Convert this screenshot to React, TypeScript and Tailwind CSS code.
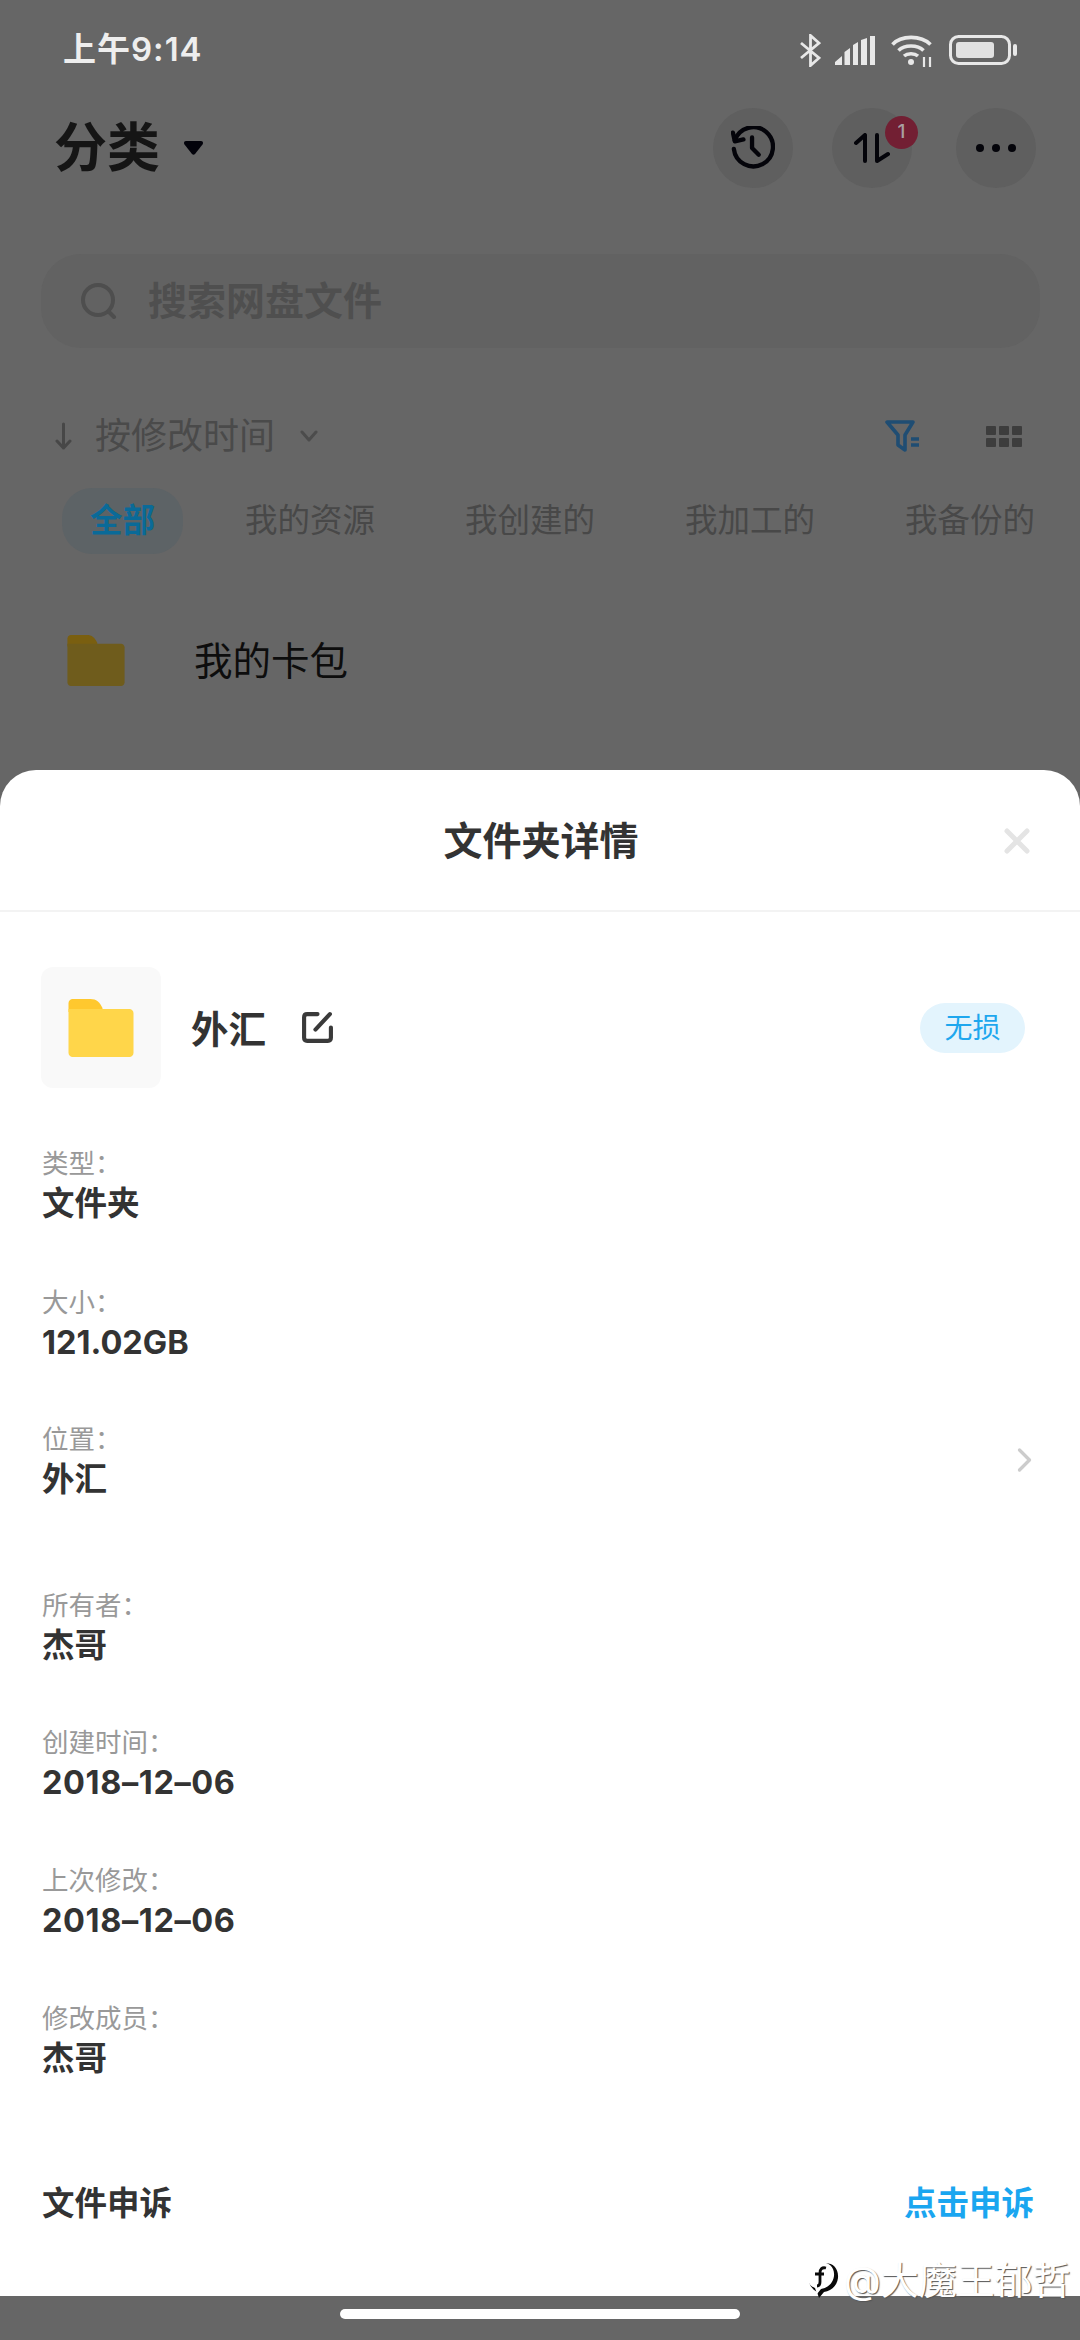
import React from "react";

const font = { fontFamily: '"Inter","Noto Sans CJK SC",sans-serif' };

function Folder({ w, h, body, tab }: { w: number; h: number; body: string; tab: string }) {
  return (
    <svg width={w} height={h} viewBox="0 0 65 58">
      <path d="M4 0h18c6 0 9 3 12 9v4H0V4c0-2 2-4 4-4z" fill={tab} />
      <path d="M0 10h61c2 0 4 2 4 4v40c0 2-2 4-4 4H4c-2 0-4-2-4-4z" fill={body} />
    </svg>
  );
}

function Row({ label, value, className = "", valueClass = "" }: { label: string; value: string; className?: string; valueClass?: string }) {
  return (
    <div className={"flex flex-col " + className}>
      <div className="h-[40px] text-[26.500px] leading-[40px] text-[#999999]">{label}</div>
      <div className={"h-[42px] text-[32.500px] leading-[42px] font-bold text-[#333333] " + valueClass}>{value}</div>
    </div>
  );
}

export default function App() {
  return (
    <div style={font} className="relative flex h-[2340px] w-[1080px] flex-col overflow-hidden bg-[#666666]">
      {/* background page */}
      <div className="flex h-[770px] shrink-0 flex-col overflow-hidden">
        <div className="flex h-[100px] items-center justify-between pl-[63px] pr-[63px]">
          <span className="text-[33px] font-semibold tracking-[1px] text-[#eeeeee]">上午9:14</span>
          <div className="flex items-center">
            <svg width="21" height="33" viewBox="0 0 21 33" fill="none" stroke="#e8e8e8" strokeWidth="2.800">
              <path d="M1 9l18 15-8.500 7.500V1.500L19 9 1 24" />
            </svg>
            <svg className="ml-[14px]" width="40" height="29" viewBox="0 0 40 29" fill="#e8e8e8">
              <path d="M0 29v-3l7-6v9zM9.500 29V16l5.500-4v17zM18 29V9l5-3v23zM26 29V4l6-2v27zM35 29V0h5v29z" />
            </svg>
            <svg className="ml-[16px]" width="42" height="33" viewBox="0 0 42 33" fill="none" stroke="#e8e8e8" strokeWidth="3.600">
              <path d="M1.500 10.500C10 1 30 1 39.500 10.500" />
              <path d="M7.500 16.500c6-6 19-6 25 0" />
              <path d="M13 22c3.500-3 10.500-3 14 0" />
              <circle cx="20" cy="28" r="3" fill="#e8e8e8" stroke="none" />
              <path d="M33 33V23M39 33V23" strokeWidth="2.200" />
            </svg>
            <svg className="ml-[16px]" width="68" height="30" viewBox="0 0 68 30">
              <rect x="1.500" y="1.500" width="59" height="27" rx="8" fill="none" stroke="#e8e8e8" strokeWidth="3" />
              <rect x="7" y="7" width="38" height="16" rx="3" fill="#e2e2e2" />
              <rect x="64" y="9" width="4" height="12" rx="2" fill="#e8e8e8" />
            </svg>
          </div>
        </div>
        <div className="mt-[8px] flex h-[80px] items-center justify-between pl-[54px] pr-[44px]">
          <div className="flex items-center">
            <span className="text-[53px] leading-[60px] font-bold text-[#151515]">分类</span>
            <svg className="ml-[24px]" width="19" height="14" viewBox="0 0 19 14">
              <path d="M2 0h15c2 0 2.500 2 1.500 3.500L11 13c-1 1-2 1-3 0L.5 3.500C-.5 2 0 0 2 0z" fill="#02020a" />
            </svg>
          </div>
          <div className="flex items-center">
            <div className="flex h-[80px] w-[80px] items-center justify-center rounded-full bg-[#5f5f5f]">
              <svg width="44" height="44" viewBox="0 0 46 46" fill="none" stroke="#04040a" strokeWidth="4.500" strokeLinecap="round" strokeLinejoin="round">
                <path d="M4 15A20.500 20.500 0 1 1 3 24" />
                <path d="M2 7l2 9 9-2" />
                <path d="M22 12v11l7 7" />
              </svg>
            </div>
            <div className="relative ml-[39px] flex h-[80px] w-[80px] items-center justify-center rounded-full bg-[#5f5f5f]">
              <svg width="36" height="30" viewBox="0 0 36 30" fill="none" stroke="#04040a" strokeWidth="4" strokeLinecap="round" strokeLinejoin="round">
                <path d="M2 10L11 2v26" />
                <path d="M23 2v26l11-7" />
              </svg>
              <div className="absolute right-[-6px] top-[8px] flex h-[33px] w-[33px] items-center justify-center rounded-full bg-[#721f33] text-[19px] font-medium text-[#a8a0a2]">1</div>
            </div>
            <div className="ml-[44px] flex h-[80px] w-[80px] items-center justify-center gap-[8px] rounded-full bg-[#5f5f5f]">
              <span className="h-[8px] w-[8px] rounded-full bg-[#04040a]" />
              <span className="h-[8px] w-[8px] rounded-full bg-[#04040a]" />
              <span className="h-[8px] w-[8px] rounded-full bg-[#04040a]" />
            </div>
          </div>
        </div>
        <div className="mx-[41px] mt-[66px] flex h-[94px] w-[999px] items-center rounded-[40px] bg-[#626262] pl-[40px]">
          <svg width="36" height="36" viewBox="0 0 36 36" fill="none" stroke="#4e4e4e" strokeWidth="4" strokeLinecap="round">
            <circle cx="17" cy="17" r="15" />
            <path d="M28 29l5 5" />
          </svg>
          <span className="ml-[31px] text-[39px] font-bold text-[#4f4f4f]">搜索网盘文件</span>
        </div>
        <div className="mt-[68px] flex h-[40px] items-center justify-between pl-[55px] pr-[58px]">
          <div className="flex items-center">
            <svg width="17" height="28" viewBox="0 0 17 28" fill="none" stroke="#474747" strokeWidth="3" strokeLinecap="round" strokeLinejoin="round">
              <path d="M8.500 2v24M2 19l6.500 7 6.500-7" />
            </svg>
            <span className="ml-[23px] text-[36px] leading-[40px] text-[#4a4a4a]">按修改时间</span>
            <svg className="ml-[25px]" width="18" height="12" viewBox="0 0 18 12" fill="none" stroke="#4c4c4c" strokeWidth="3" strokeLinecap="round" strokeLinejoin="round">
              <path d="M2 2l7 8 7-8" />
            </svg>
          </div>
          <div className="flex items-center">
            <svg width="36" height="32" viewBox="0 0 36 32" fill="none" stroke="#1f4d73" strokeWidth="3.600" strokeLinejoin="round">
              <path d="M2 2h26l-8 13v15l-7-5V15z" />
              <path d="M26 19h8M26 25h8" strokeWidth="3.500" />
            </svg>
            <div className="ml-[65px] grid w-[36px] grid-cols-3 gap-[3px]">
              {[0, 1, 2, 3, 4, 5].map((i) => (
                <span key={i} className="h-[9px] w-[10px] rounded-[1px] bg-[#3d3d3d]" />
              ))}
            </div>
          </div>
        </div>
        <div className="mt-[32px] flex items-center pl-[62px]">
          <div className="flex h-[66px] w-[121px] items-center justify-center rounded-[30px] bg-[#5d6366] text-[32.500px] font-bold text-[#0a6a98]">全部</div>
          <div className="ml-[62px] flex gap-[90px] whitespace-nowrap text-[32.500px] text-[#484848]">
            <span>我的资源</span>
            <span>我创建的</span>
            <span>我加工的</span>
            <span>我备份的</span>
          </div>
        </div>
        <div className="mt-[81px] flex items-center pl-[67px]">
          <Folder w={58} h={51} body="#6f5c1c" tab="#7a5f10" />
          <span className="ml-[69px] text-[38.500px] leading-[50px] text-[#0d0d0d]">我的卡包</span>
        </div>
      </div>

      {/* sheet */}
      <div className="flex h-[1526px] shrink-0 flex-col rounded-t-[36px] bg-white">
        <div className="relative flex h-[142px] shrink-0 items-center justify-center border-b-2 border-[#f3f3f3] pt-[2px]">
          <span className="pl-[2px] text-[39px] font-bold text-[#333333]">文件夹详情</span>
          <svg className="absolute right-[50px] top-[58px]" width="26" height="26" viewBox="0 0 26 26" stroke="#e4e4e4" strokeWidth="5" strokeLinecap="round">
            <path d="M3 3l20 20M23 3L3 23" />
          </svg>
        </div>
        <div className="mt-[55px] flex h-[121px] shrink-0 items-center pl-[41px] pr-[55px]">
          <div className="flex h-[121px] w-[120px] items-center justify-center rounded-[12px] bg-[#f9f9f9]">
            <Folder w={66} h={58} body="#ffd64a" tab="#ffc82e" />
          </div>
          <span className="ml-[30px] pt-[5px] text-[37.500px] font-bold text-[#333333]">外汇</span>
          <svg className="ml-[35px]" width="33" height="33" viewBox="0 0 32 32" fill="none" stroke="#3a3a3a" strokeWidth="4" strokeLinecap="round">
            <path d="M16 3H6C4 3 3 4 3 6v20c0 2 1 3 3 3h20c2 0 3-1 3-3V16" />
            <path d="M14 18L28 3" />
          </svg>
          <div className="ml-auto flex h-[50px] w-[105px] items-center justify-center rounded-full bg-[#e3f4fd] text-[28px] text-[#1ea7ee]">无损</div>
        </div>
        <div className="mt-[55px] flex flex-col pl-[42px] pr-[46px]">
          <Row label="类型：" value="文件夹" className="mb-[57px]" />
          <Row label="大小：" value="121.02GB" className="mb-[55px]" />
          <div className="mb-[84px] flex items-center justify-between">
            <Row label="位置：" value="外汇" />
            <svg className="mr-[2px]" width="15" height="28" viewBox="0 0 18 30" fill="none" stroke="#cccccc" strokeWidth="4" strokeLinecap="round" strokeLinejoin="round">
              <path d="M3 3l12 12L3 27" />
            </svg>
          </div>
          <Row label="所有者：" value="杰哥" className="mb-[55px]" />
          <Row label="创建时间：" value="2018–12–06" valueClass="tracking-[0.600px]" className="mb-[56px]" />
          <Row label="上次修改：" value="2018–12–06" valueClass="tracking-[0.600px]" className="mb-[56px]" />
          <Row label="修改成员：" value="杰哥" />
          <div className="mt-[102px] flex h-[44px] items-center justify-between">
            <span className="text-[32.500px] font-bold text-[#333333]">文件申诉</span>
            <span className="text-[32.500px] font-bold text-[#1aa6f0]">点击申诉</span>
          </div>
        </div>
      </div>

      {/* nav */}
      <div className="flex flex-1 items-start justify-center pt-[13px]">
        <div className="h-[10px] w-[400px] rounded-full bg-white" />
      </div>

      {/* watermark */}
      <div className="absolute left-[807px] top-[2257px] flex items-center">
        <svg width="32" height="46" viewBox="0 0 32 38">
          <path d="M14 3c9-3 18 2 17 14-1 8-7 13-14 14l-5 6-2-6C5 28 1 23 2 16 3 9 8 4 14 3z" fill="#0a0a0a" />
          <path d="M12 2c8-2 16 3 15 13-1 8-7 12-13 13l-4 5-2-6C3 25 0 21 1 15 2 8 6 3 12 2z" fill="#ffffff" />
          <path d="M19 7c-4-1-6 1-6 5v9c0 3-1 4-3 4M8 13h9" fill="none" stroke="#0a0a0a" strokeWidth="2.800" />
        </svg>
        <span className="ml-[5px] text-[38px] leading-[44px] whitespace-nowrap text-white [text-shadow:1px_1px_1px_#555555]">@大魔王郁哲</span>
      </div>
    </div>
  );
}
